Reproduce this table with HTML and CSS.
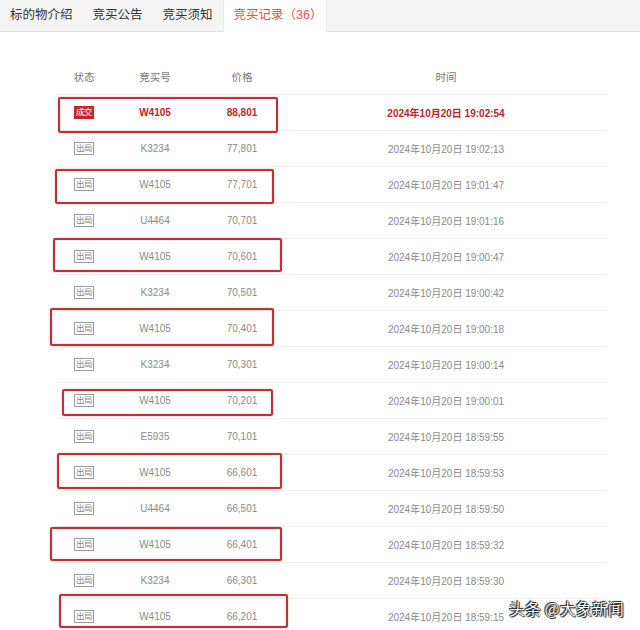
FILE: index.html
```html
<!DOCTYPE html>
<html lang="zh">
<head>
<meta charset="utf-8">
<title>竞买记录</title>
<link rel="stylesheet" href="styles.css">
</head>
<body>
<div class="tabs">
  <div class="tab">标的物介绍</div>
  <div class="tab">竞买公告</div>
  <div class="tab">竞买须知</div>
  <div class="tab active">竞买记录（36）</div>
</div>
<div class="records">
  <div class="row head"><div>状态</div><div>竞买号</div><div>价格</div><div>时间</div></div>
  <div class="row win"><div><span class="badge deal">成交</span></div><div>W4105</div><div>88,801</div><div>2024年10月20日 19:02:54</div></div>
  <div class="row"><div><span class="badge">出局</span></div><div>K3234</div><div>77,801</div><div>2024年10月20日 19:02:13</div></div>
  <div class="row"><div><span class="badge">出局</span></div><div>W4105</div><div>77,701</div><div>2024年10月20日 19:01:47</div></div>
  <div class="row"><div><span class="badge">出局</span></div><div>U4464</div><div>70,701</div><div>2024年10月20日 19:01:16</div></div>
  <div class="row"><div><span class="badge">出局</span></div><div>W4105</div><div>70,601</div><div>2024年10月20日 19:00:47</div></div>
  <div class="row"><div><span class="badge">出局</span></div><div>K3234</div><div>70,501</div><div>2024年10月20日 19:00:42</div></div>
  <div class="row"><div><span class="badge">出局</span></div><div>W4105</div><div>70,401</div><div>2024年10月20日 19:00:18</div></div>
  <div class="row"><div><span class="badge">出局</span></div><div>K3234</div><div>70,301</div><div>2024年10月20日 19:00:14</div></div>
  <div class="row"><div><span class="badge">出局</span></div><div>W4105</div><div>70,201</div><div>2024年10月20日 19:00:01</div></div>
  <div class="row"><div><span class="badge">出局</span></div><div>E5935</div><div>70,101</div><div>2024年10月20日 18:59:55</div></div>
  <div class="row"><div><span class="badge">出局</span></div><div>W4105</div><div>66,601</div><div>2024年10月20日 18:59:53</div></div>
  <div class="row"><div><span class="badge">出局</span></div><div>U4464</div><div>66,501</div><div>2024年10月20日 18:59:50</div></div>
  <div class="row"><div><span class="badge">出局</span></div><div>W4105</div><div>66,401</div><div>2024年10月20日 18:59:32</div></div>
  <div class="row"><div><span class="badge">出局</span></div><div>K3234</div><div>66,301</div><div>2024年10月20日 18:59:30</div></div>
  <div class="row"><div><span class="badge">出局</span></div><div>W4105</div><div>66,201</div><div>2024年10月20日 18:59:15</div></div>
</div>

<div class="mark m1"></div>
<div class="mark m2"></div>
<div class="mark m3"></div>
<div class="mark m4"></div>
<div class="mark m5"></div>
<div class="mark m6"></div>
<div class="mark m7"></div>
<div class="mark m8"></div>

<div class="watermark">头条 @大象新闻</div>
</body>
</html>
```
FILE: styles.css
```css
html, body {
  margin: 0;
  padding: 0;
  background: #fff;
  font-family: "Liberation Sans", "Noto Sans CJK SC", sans-serif;
  overflow: hidden;
}
body {
  position: relative;
  width: 640px;
  height: 630px;
}
.tabs {
  display: flex;
  height: 31px;
  background: #f4f4f4;
  border-bottom: 1px solid #e4e4e4;
}
.tab {
  padding: 0 10px;
  line-height: 31px;
  font-size: 12.5px;
  color: #333;
  margin-right: 0;
}
.tab.active {
  background: #fff;
  color: #d9534f;
  padding-right: 4px;
  border-left: 1px solid #ececec;
  border-right: 1px solid #ececec;
  height: 32px;
  margin-left: 0;
}
.records {
  margin-left: 57px;
  width: 550px;
  padding-top: 26px;
}
.row {
  display: grid;
  grid-template-columns: 54px 88px 86px 322px;
  height: 35px;
  border-bottom: 1px solid #f0f0f0;
  align-items: center;
  font-size: 10px;
  color: #8a8a8a;
}
.row > div {
  text-align: center;
}
.row.head {
  height: 36px;
  font-size: 10.5px;
  color: #777;
  border-bottom: 1px solid #eeeeee;
}
.row.win {
  color: #b8262c;
  font-weight: bold;
}
.badge {
  display: inline-block;
  width: 18px;
  height: 11px;
  line-height: 11px;
  font-size: 8.5px;
  border: 1px solid #9a9a9a;
  color: #888;
  font-weight: normal;
  vertical-align: middle;
  letter-spacing: -0.5px;
}
.badge.deal {
  background: #c7262c;
  border-color: #c7262c;
  color: #fff;
}
.mark {
  position: absolute;
  border: 2px solid #bd3239;
  border-radius: 2px;
  box-shadow: 0 0 2px rgba(210, 70, 70, 0.45), inset 0 0 2px rgba(210, 70, 70, 0.35);
  box-sizing: border-box;
}
.m1 { left: 58px; top: 97px; width: 220px; height: 36px; }
.m2 { left: 55px; top: 169px; width: 219px; height: 35px; }
.m3 { left: 53px; top: 238px; width: 229px; height: 34px; }
.m4 { left: 50px; top: 308px; width: 224px; height: 38px; }
.m5 { left: 62px; top: 389px; width: 211px; height: 27px; }
.m6 { left: 57px; top: 453px; width: 225px; height: 36px; }
.m7 { left: 50px; top: 527px; width: 232px; height: 34px; }
.m8 { left: 59px; top: 594px; width: 229px; height: 34px; }
.watermark {
  position: absolute;
  left: 509px;
  top: 596px;
  font-size: 16px;
  color: #fff;
  font-family: "Noto Sans CJK SC", sans-serif;
  text-shadow: 0 0 1px #000, 0 0 1px #000, 1px 1px 1px #222, -1px -1px 1px #222;
}
```
